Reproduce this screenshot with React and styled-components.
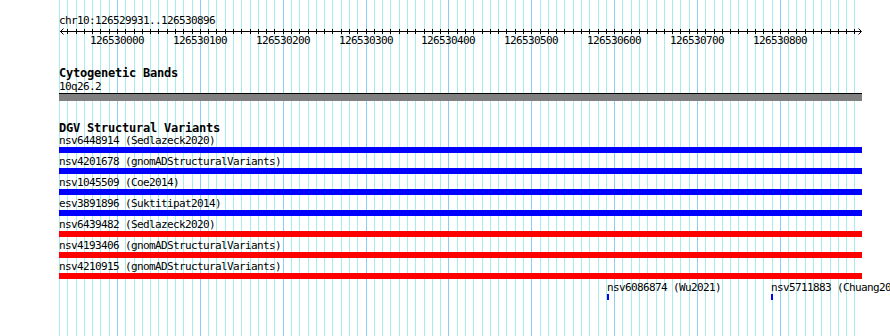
import React from 'react';
import styled, { createGlobalStyle } from 'styled-components';

const REF_BP = 126530000;
const REF_X = 117.5;
const SCALE = 0.8285;
const PAD = 59;
const TRACK_W = 803;
const VIEW_START = 126529931;
const VIEW_END = 126530896;

const bpToX = (bp) => REF_X + (bp - REF_BP) * SCALE;

const gridLines = [];
for (let bp = 126529930; bp <= 126530890; bp += 10) {
  gridLines.push({ bp, x: Math.floor(bpToX(bp)), major: bp % 100 === 0 });
}

const gridBackground = (() => {
  const stops = ['transparent 0px'];
  gridLines.forEach(({ x, major }) => {
    const c = major ? '#87cefa' : '#a8ecf0';
    stops.push(`transparent ${x}px`, `${c} ${x}px`, `${c} ${x + 1}px`, `transparent ${x + 1}px`);
  });
  return `linear-gradient(to right, ${stops.join(', ')})`;
})();

const GlobalStyle = createGlobalStyle`
  html, body {
    margin: 0;
    padding: 0;
    overflow: hidden;
    background: #ffffff;
  }
`;

const Page = styled.div`
  box-sizing: border-box;
  width: 890px;
  height: 336px;
  overflow: hidden;
  padding: 15px 0 0 ${PAD}px;
  background-color: #ffffff;
  background-image: ${(p) => p.$grid};
  background-repeat: no-repeat;
  color: #000;
  font-family: "DejaVu Sans Mono", "Liberation Mono", monospace;
  font-size: 11px;
  letter-spacing: -0.62px;
`;

const PositionLabel = styled.div`
  height: 12px;
  line-height: 12px;
  white-space: nowrap;
`;

const RulerSvg = styled.svg`
  display: block;
  overflow: visible;
  text {
    font-family: "DejaVu Sans Mono", "Liberation Mono", monospace;
    font-size: 11px;
    letter-spacing: -0.62px;
    fill: #000;
  }
`;

const Track = styled.section`
  margin-top: ${(p) => p.$gap}px;
  width: ${TRACK_W}px;
`;

const TrackTitle = styled.h2`
  margin: 0;
  height: ${(p) => p.$h}px;
  line-height: ${(p) => p.$h}px;
  font-size: 12px;
  font-weight: bold;
  letter-spacing: -0.225px;
  white-space: nowrap;
`;

const BandLabel = styled.div`
  height: 13px;
  line-height: 13px;
  white-space: nowrap;
`;

const BandBar = styled.div`
  height: 7px;
  border-top: 1px solid #000;
  background: #808080;
`;

const Lane = styled.div`
  position: relative;
  height: 21px;
`;

const Feature = styled.div`
  position: absolute;
  top: 0;
  display: flex;
  flex-direction: column;
  align-items: flex-start;
`;

const FeatureLabel = styled.span`
  height: 13px;
  line-height: 13px;
  white-space: nowrap;
`;

const FeatureGlyph = styled.div`
  height: 6px;
  background: ${(p) => (p.$kind === 'loss' ? '#ff0000' : '#0000ff')};
`;

const lanes = [
  [{ id: 'nsv6448914', source: 'Sedlazeck2020', kind: 'gain', start: 126412000, end: 126611000 }],
  [{ id: 'nsv4201678', source: 'gnomADStructuralVariants', kind: 'gain', start: 126388000, end: 126702000 }],
  [{ id: 'nsv1045509', source: 'Coe2014', kind: 'gain', start: 126455000, end: 126580000 }],
  [{ id: 'esv3891896', source: 'Suktitipat2014', kind: 'gain', start: 126470000, end: 126640000 }],
  [{ id: 'nsv6439482', source: 'Sedlazeck2020', kind: 'loss', start: 126501000, end: 126560000 }],
  [{ id: 'nsv4193406', source: 'gnomADStructuralVariants', kind: 'loss', start: 126420000, end: 126610000 }],
  [{ id: 'nsv4210915', source: 'gnomADStructuralVariants', kind: 'loss', start: 126497000, end: 126545000 }],
  [
    { id: 'nsv6086874', source: 'Wu2021', kind: 'gain', start: 126530591, end: 126530592 },
    { id: 'nsv5711883', source: 'Chuang2021', kind: 'gain', start: 126530789, end: 126530790 },
  ],
];

const placeFeature = (f) => {
  const full = f.start <= VIEW_START && f.end >= VIEW_END;
  if (full) return { left: 0, width: TRACK_W };
  const left = Math.max(0, Math.floor(bpToX(f.start)) - PAD);
  const right = Math.min(TRACK_W, bpToX(f.end + 1) - PAD);
  return { left, width: Math.max(2, Math.round(right - left)) };
};

const Ruler = () => {
  const majors = gridLines.filter((g) => g.major);
  return (
    <RulerSvg width={TRACK_W} height={20} viewBox={`0 0 ${TRACK_W} 20`}>
      <line x1={1} y1={4.5} x2={802} y2={4.5} stroke="#000" shapeRendering="crispEdges" />
      <polyline points="4.5,1.5 1.5,4.5 4.5,7.5" fill="none" stroke="#000" />
      <polyline points="799.5,1.5 802.5,4.5 799.5,7.5" fill="none" stroke="#000" />
      {gridLines
        .filter((g) => g.x - PAD > 4 && g.x - PAD < 799)
        .map((g) => (
          <line
            key={g.bp}
            x1={g.x - PAD + 0.5}
            x2={g.x - PAD + 0.5}
            y1={2}
            y2={7}
            stroke="#000"
            shapeRendering="crispEdges"
          />
        ))}
      {majors.map((g) => (
        <text key={g.bp} x={g.x - PAD} y={17} textAnchor="middle">
          {g.bp}
        </text>
      ))}
    </RulerSvg>
  );
};

export default function App() {
  return (
    <>
      <GlobalStyle />
      <Page $grid={gridBackground}>
        <PositionLabel>chr10:126529931..126530896</PositionLabel>
        <Ruler />
        <Track $gap={20}>
          <TrackTitle $h={13}>Cytogenetic Bands</TrackTitle>
          <BandLabel>10q26.2</BandLabel>
          <BandBar />
        </Track>
        <Track $gap={21}>
          <TrackTitle $h={12}>DGV Structural Variants</TrackTitle>
          {lanes.map((lane, i) => (
            <Lane key={i}>
              {lane.map((f) => {
                const { left, width } = placeFeature(f);
                return (
                  <Feature key={f.id} style={{ left }}>
                    <FeatureLabel>
                      {f.id} ({f.source})
                    </FeatureLabel>
                    <FeatureGlyph $kind={f.kind} style={{ width }} />
                  </Feature>
                );
              })}
            </Lane>
          ))}
        </Track>
      </Page>
    </>
  );
}
